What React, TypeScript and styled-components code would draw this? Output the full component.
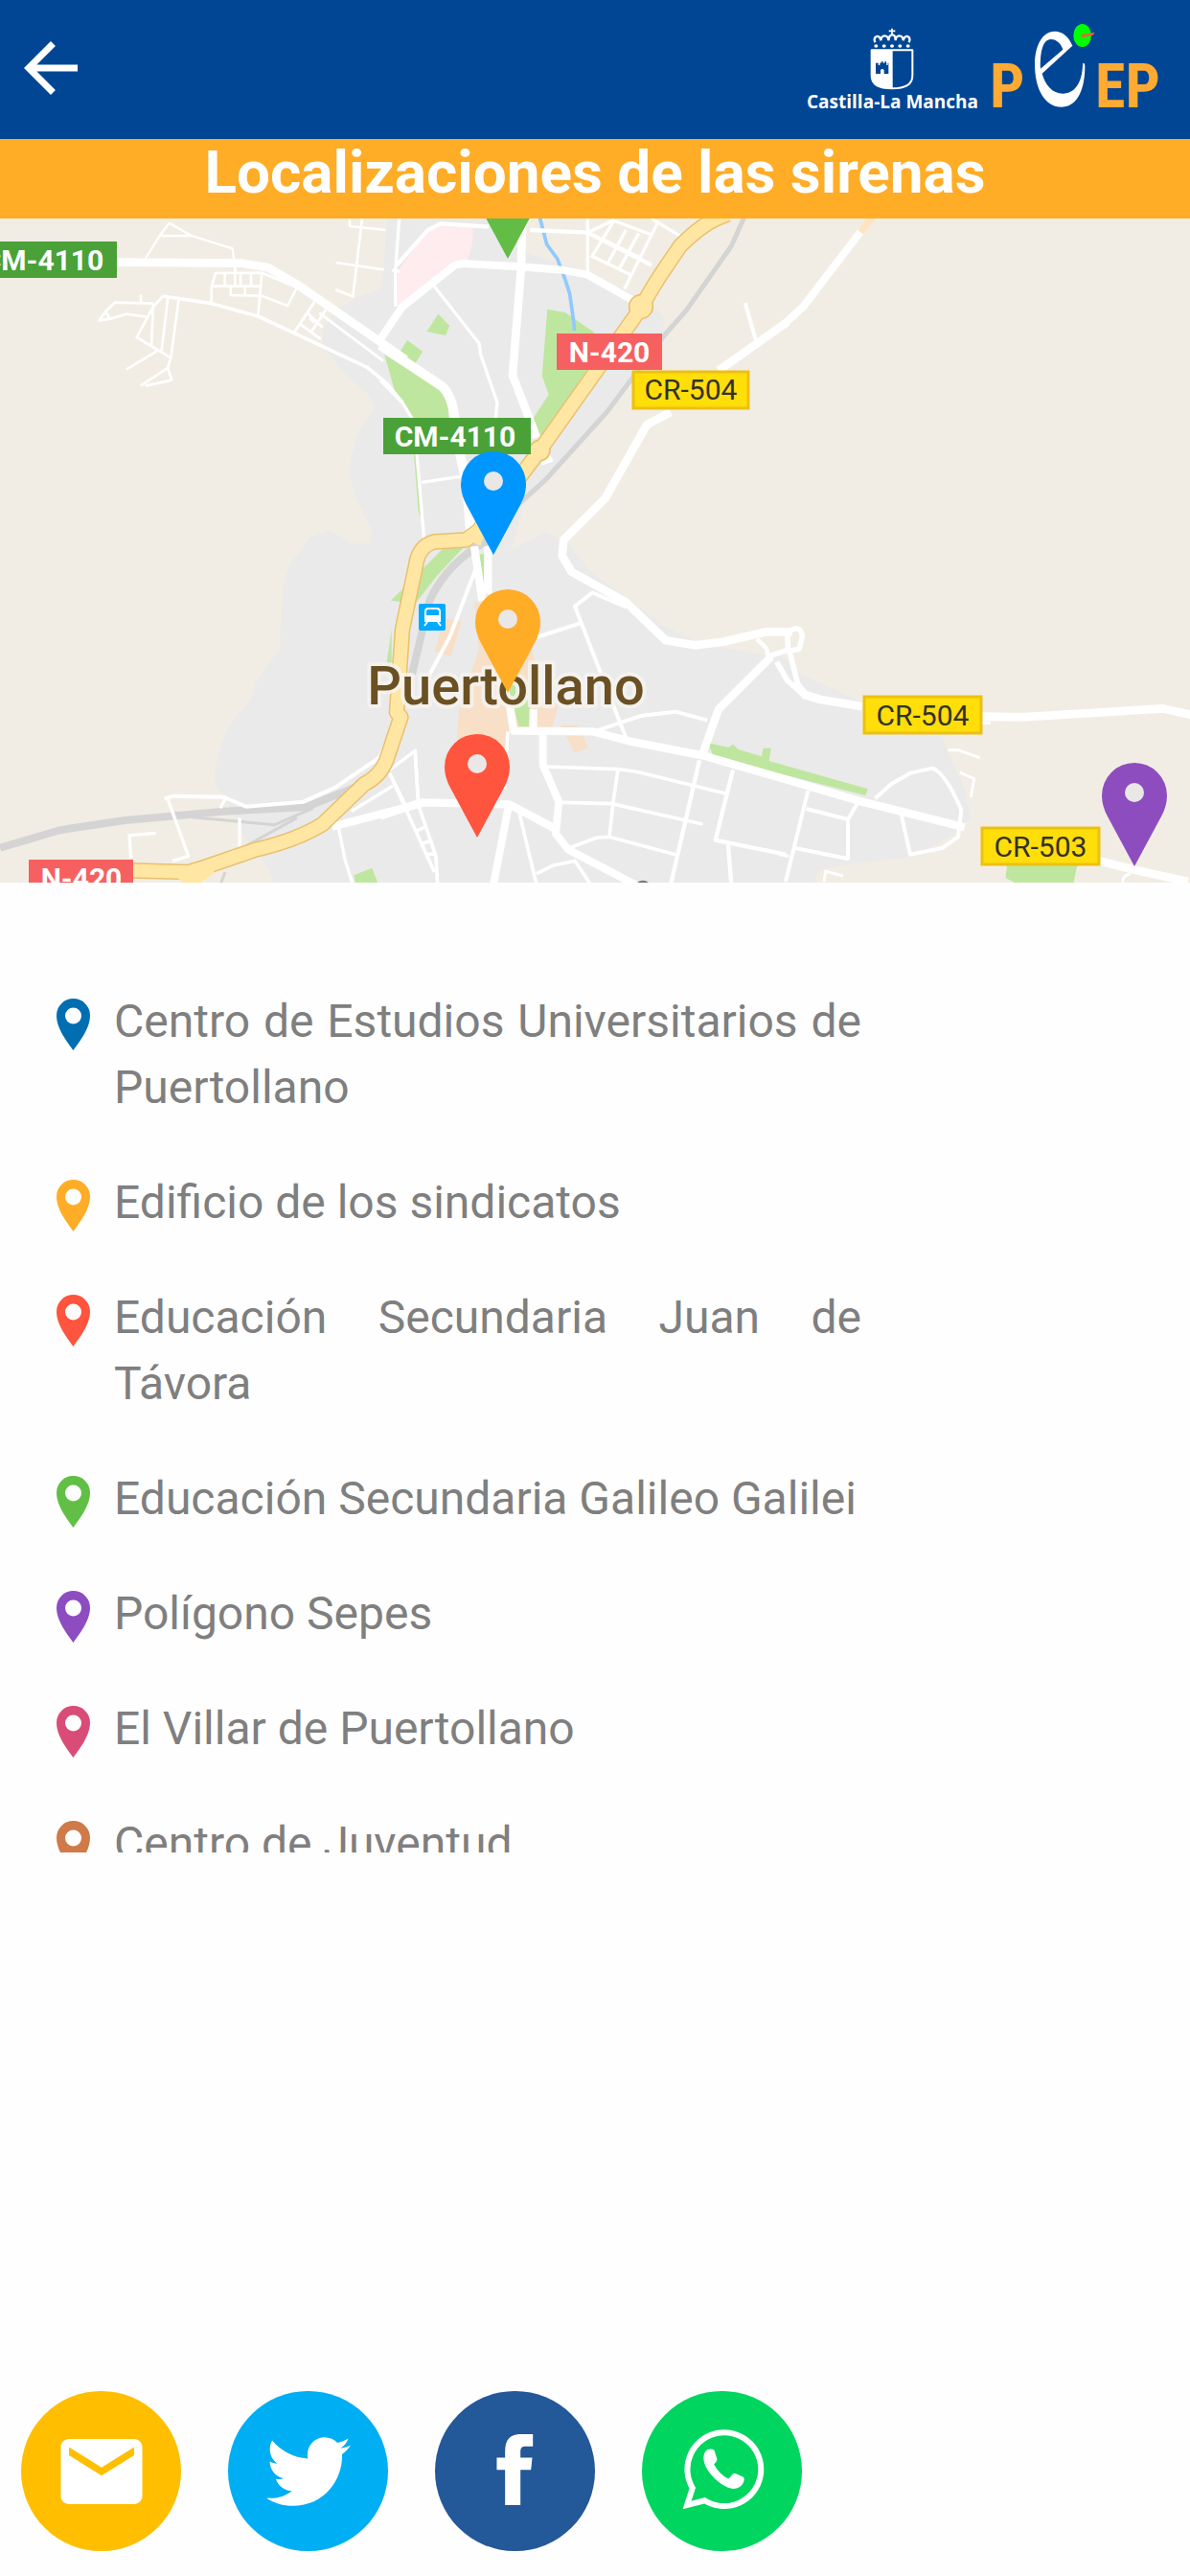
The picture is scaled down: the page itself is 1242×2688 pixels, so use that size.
import React from 'react';
import styled, { createGlobalStyle } from 'styled-components';
import { MdArrowBack, MdEmail } from 'react-icons/md';
import { FaTwitter } from 'react-icons/fa';

const GlobalStyle = createGlobalStyle`
  *, *::before, *::after { box-sizing: border-box; }
  body { margin: 0; background: #fefefe; font-family: Roboto, "Noto Sans", sans-serif; }
`;

const Page = styled.div`
  display: flex;
  flex-direction: column;
  min-height: 100vh;
`;

const TopBar = styled.header`
  display: flex;
  align-items: center;
  justify-content: space-between;
  height: 145px;
  padding: 0 32px 4px 11px;
  background: #004694;
`;

const BackButton = styled.button`
  display: flex;
  padding: 0;
  border: 0;
  background: none;
  color: #fff;
  font-size: 84px;
  cursor: pointer;
`;

const Brands = styled.div`
  display: flex;
  align-items: flex-end;
  gap: 16px;
`;

const Region = styled.div`
  display: flex;
  flex-direction: column;
  align-items: center;
  color: #fff;
  font: bold 19px/22px "Open Sans", "DejaVu Sans", sans-serif;
  svg { display: block; }
`;

const LogoSvg = styled.svg`
  display: block;
  margin-bottom: 4px;
  overflow: visible;
`;

const LogoLetter = styled.text`
  fill: #ffaa33;
  font: bold 64px "Liberation Sans Narrow", "Roboto Condensed", Roboto, sans-serif;
`;

const Title = styled.h1`
  margin: 0;
  height: 83px;
  background: #ffac27;
  color: #fff;
  font-size: 62px;
  font-weight: 700;
  line-height: 70px;
  text-align: center;
`;

const MapSvg = styled.svg`
  display: block;
  width: 100%;
  height: auto;
  background: #f1ede4;
`;

const RoadSign = styled.text<{ $dark?: boolean }>`
  fill: ${p => (p.$dark ? '#33312a' : '#fff')};
  font-family: Roboto, sans-serif;
  font-size: 30px;
  font-weight: ${p => (p.$dark ? 400 : 700)};
  text-anchor: middle;
`;

const TownName = styled.text`
  fill: #6a5023;
  stroke: rgba(245, 243, 240, 0.85);
  stroke-width: 8px;
  stroke-linejoin: round;
  paint-order: stroke;
  font-family: Roboto, sans-serif;
  font-size: 56px;
  font-weight: 500;
  text-anchor: middle;
`;

const ListPanel = styled.main`
  height: 1012px;
  padding: 110px 32px 0 59px;
  overflow-y: auto;
  scrollbar-width: none;
`;

const SirenList = styled.ul`
  display: flex;
  flex-direction: column;
  gap: 51px;
  margin: 0;
  padding: 0;
  list-style: none;
`;

const SirenRow = styled.li`
  display: grid;
  grid-template-columns: 35px minmax(0, 780px);
  column-gap: 25px;
  align-items: start;
`;

const RowPin = styled.svg`
  display: block;
  margin-top: 11px;
`;

const SirenName = styled.p`
  margin: 0;
  color: #7f7f7f;
  font-size: 48px;
  line-height: 69px;
  text-align: justify;
`;

const ShareBar = styled.footer`
  display: flex;
  gap: 49px;
  margin-top: auto;
  padding: 26px 22px;
`;

const ShareLink = styled.a<{ $color: string }>`
  display: flex;
  align-items: center;
  justify-content: center;
  width: 167px;
  height: 167px;
  border-radius: 50%;
  background: ${p => p.$color};
  color: #fff;
`;

function Shield() {
  return (
    <svg width="46" height="66" viewBox="0 0 138 198" aria-hidden="true">
      <path d="M69 2v20M59 10h20" stroke="#fff" strokeWidth="5" />
      <path d="M16 46C6 26 32 18 34 40C34 20 58 20 58 40C60 16 80 16 80 40C80 20 104 20 104 40C108 18 132 26 122 46" fill="none" stroke="#fff" strokeWidth="7" />
      {[19, 44, 69, 94, 119].map(x => <ellipse key={x} cx={x} cy="57" rx="6" ry="5" fill="#fff" />)}
      <path d="M5 70H133V150C133 182 100 190 69 190S5 182 5 150Z" fill="#004694" stroke="#fff" strokeWidth="6" strokeLinejoin="round" />
      <path d="M5 70H71V190C38 190 5 182 5 150Z" fill="#fff" />
      <path d="M18 144V110H26V117H31V110H35V106H41V110H46V106H51V110H52V117H56V110H58V144H44V132Q38 126 33 132V144Z" fill="#004694" />
    </svg>
  );
}

function PeepLogo() {
  return (
    <LogoSvg width="173" height="88" viewBox="0 0 173 88" role="img" aria-label="PEEP">
      <LogoLetter x="-4" y="87">P</LogoLetter>
      <LogoLetter x="106" y="87">EP</LogoLetter>
      <g transform="scale(0.3333) translate(-651 -75)">
        <path fill="#fff" fillRule="evenodd" d="M898 143C885 112 865 98 843 98C800 98 780 150 780 200C780 280 812 335 865 335C915 335 938 275 937 205C935 195 930 195 930 205C928 260 905 293 868 293C835 293 812 265 803 230ZM798 215C796 165 805 123 830 123C850 123 862 138 868 155Z" />
        <ellipse cx="929" cy="111" rx="28" ry="36" fill="#0f0" />
        <path d="M926 109L968 101L962 110L928 118Z" fill="#f0603a" />
      </g>
    </LogoSvg>
  );
}

type Tile = { x: number; y: number; roads: [number, string][] };

/* Minor and main streets, grouped by map tile: [stroke width, path] */
const tiles: Tile[] = [
  {
    x: 0, y: 660,
    roads: [
      [26, 'M360 161L760 164L840 178L930 230L1190 410L1270 465'],
      [7, 'M455 150L500 78L530 38L600 78L728 118L732 150M500 78H600'],
      [8, 'M662 290V240L675 195L820 194L930 240L900 297L820 266M820 194L808 330M662 236H815M704 195V236M736 160V236M753 195V236M786 195V236M722 236V264L820 266M767 240V264'],
      [11, 'M510 267L662 290L808 330L920 382L1150 490L1210 540L1260 600'],
      [8, 'M510 267L480 300L428 396L535 460L560 275M526 270L506 437M480 290L474 420M480 290L360 287L330 316L310 343L345 338L395 323L460 332M330 316L345 338M441 262V285M395 497L490 440M535 460L525 492L440 548M525 492L538 530L455 548'],
      [9, 'M985 285L920 382M1000 320L1200 470M1020 310L975 378M960 318L1010 365M970 335L985 350M940 355L1005 402'],
      [8, 'M1095 20V48L1207 60M1134 24L1105 268L1050 247M1052 162L1202 184'],
    ],
  },
  {
    x: 1200, y: 660,
    roads: [
      [24, 'M-15 410L60 300L225 170L250 165L430 175L560 185L640 200L800 290'],
      [26, 'M435 24L432 175L405 515L480 710'],
      [30, 'M-10 420L185 550Q215 580 222 640L240 760L262 860L275 1030'],
      [13, 'M42 170L140 60L180 40L330 50M460 60L640 68L840 170'],
      [10, 'M50 24L38 190V300M28 185L50 190'],
      [10, 'M155 230L300 415L305 450L357 600L352 650M-10 530L60 600L90 650L105 760L128 1030M120 850L240 832'],
      [10, 'M640 24V200M640 68L720 30L840 75M650 140L775 200M860 35L755 245M720 35L655 140M760 60L700 170M800 70L740 180M690 90L800 145M840 24L940 85'],
      [12, 'M1133 288L1168 410'],
      [26, 'M1265 348L1175 412L1050 500M900 630L825 670L695 900L565 1030L560 1080L590 1130L760 1225L885 1345L975 1360L1060 1350L1200 1318L1280 1318'],
      [14, 'M500 745L525 780L495 790'],
    ],
  },
  { x: 2460, y: 660, roads: [[24, 'M-5 355L55 300L235 65']] },
  {
    x: 0, y: 1710,
    roads: [
      [12, 'M515 790L545 782L700 785L770 815L950 800L1050 755L1190 660L1260 500'],
      [10, 'M525 790L590 970L540 985M705 790L690 820M750 850V940M410 975L405 905L488 898'],
      [25, 'M1040 878L1320 805'],
      [10, 'M1060 880L1080 980L1105 1060M1220 710L1280 830M1100 830L1230 750M1220 700L1300 640L1310 800'],
    ],
  },
  {
    x: 1200, y: 1710,
    roads: [
      [25, 'M-10 845L120 802L395 808L540 885M285 0L310 170M328 0V150'],
      [25, 'M395 490L408 578L655 580L770 610L1000 655L1260 730L1500 800L1820 880'],
      [24, 'M395 800L345 1060M500 580V685L550 800L540 900L580 950L790 1060M470 510V580'],
      [12, 'M290 70L210 280L130 430M480 285L620 240L600 188L655 145L760 190M620 240L760 600M660 580L810 530L915 518L1015 545'],
      [11, 'M390 580L380 760M510 690L735 698L790 705L1075 775M735 698L720 800L708 910M560 802L715 806L1000 870M580 945L670 912L708 910L915 965'],
      [13, 'M990 670L960 800L900 1060M1095 700L1040 920L1260 965M1080 935L1090 1060'],
      [11, 'M425 830L480 1060M480 1025L530 1000L600 985L650 1060M20 710L160 1020M110 810L165 970L170 1060M100 650L110 810M105 890L135 878M125 930L155 920M140 965L165 962'],
      [25, 'M1215 345L1050 510L1000 650'],
      [14, 'M1170 290L1200 320L1205 345'],
    ],
  },
  {
    x: 2460, y: 1710,
    roads: [
      [26, 'M30 430L60 465L110 480L240 502M610 533L740 535L1180 508L1270 528'],
      [17, 'M-60 347L5 325M-28 362L5 420L45 455M8 330L5 270Q50 240 52 285L42 322L12 328L40 440'],
      [26, 'M980 985L1100 1015L1260 1050'],
      [12, 'M280 790L330 745L390 710L460 695Q500 710 550 825L540 910L490 945L390 965L362 840M65 822L195 855V978L30 945M195 855L225 805M70 765L0 1050'],
      [9, 'M508 638H540L608 662M545 708L590 728L580 785M610 553H642M120 1050L125 1018L180 1032M1055 1052Q1055 1030 1080 1025M-20 965L10 970'],
    ],
  },
];

const yellowRoads =
  'M2280 670C2220 690 2180 720 2130 770C2090 830 2050 880 2010 960L1690 1410L1630 1490L1570 1560L1500 1660L1460 1690L1360 1696Q1310 1710 1302 1770L1260 1970L1242 2230L1255 2245L1210 2380Q1190 2430 1140 2455L1010 2580Q930 2630 800 2660L640 2715L590 2730L410 2725';

function MapPin({ x, y, color }: { x: number; y: number; color: string }) {
  return (
    <g transform={`translate(${x} ${y})`}>
      <path d="M0 108L-28 56Q-34 45-34 34A34 34 0 0 1 34 34Q34 45 28 56Z" fill={color} />
      <circle cy="31" r="10" fill="#e9e8e7" />
    </g>
  );
}

function SirenMap() {
  return (
    <MapSvg viewBox="0 0 1242 693" role="img" aria-label="Mapa de Puertollano">
      <g transform="scale(0.33333) translate(0 -684)" fill="none" strokeLinejoin="round">
        <path fill="#eaeaea" d="M1213 680L1200 860L1190 905L1110 935L1060 965L1010 1030V1080L1040 1120L1090 1180L1150 1230L1172 1275L1130 1340L1115 1380L1090 1470L1115 1560L1165 1660L1155 1700H1100L1030 1660L970 1682L940 1725L905 1770L885 1840L875 2030L800 2140L780 2200L730 2250L695 2320L672 2410L675 2455L705 2500L760 2610L835 2710L860 2770H2550L2560 2725L2630 2710L2860 2680L2990 2610L3040 2560L3020 2470L2950 2310L2660 2180L2500 2105L2460 2060L2280 2030L2180 2010L2080 1960L1960 1870L1850 1790L1780 1700L1710 1665L1600 1720L1640 1580L1720 1500L1980 1180L2080 1030L2075 990L2040 950L1840 850L1740 820L1640 790V680Z" />
        <path fill="#ffecef" d="M1350 705L1480 712Q1485 770 1460 820L1425 820L1242 960L1245 850Z" />
        <path fill="#f7dfc8" d="M1390 1935L1445 1945L1412 2055L1362 2040ZM1485 1885L1510 1890L1540 2010L1660 2020L1690 2110V2200H1750L1730 2275L1600 2290L1590 2360L1560 2380L1430 2310L1438 2220L1500 2030ZM1755 2270H1810L1842 2340L1800 2358Z" />
        <g fill="#bfe69f">
          <path d="M1372 983L1408 1020L1395 1050L1336 1038ZM1275 1065L1323 1100L1298 1142L1248 1108ZM1204 1110L1380 1220Q1408 1250 1405 1310H1290L1235 1220Z" />
          <path d="M1714 968L1770 978L1860 1040L1840 1170L1690 1370L1668 1312L1718 1235L1697 1175ZM1295 1410L1305 1420L1325 1640L1310 1600Z" />
          <path d="M1400 1705L1450 1715L1370 1800L1300 1890L1224 1880ZM1226 1970V2080H1210ZM1500 1735H1520L1515 1830ZM1600 2130L1660 2200L1655 2275H1625L1590 2150Z" />
          <path d="M2217 2325L2280 2340L2295 2330L2312 2346L2385 2368L2390 2342H2414L2408 2382L2718 2470L2710 2490L2235 2370ZM3155 2700H3375L3360 2770H3190L3148 2748ZM1108 2740L1165 2717L1185 2770H1115Z" />
        </g>
        <path stroke="#d4d4d4" strokeWidth="15" d="M2330 680L2290 770L2150 970L2080 1050L1900 1290L1710 1500L1600 1600" />
        <path stroke="#d4d4d4" strokeWidth="24" d="M1530 1690Q1400 1760 1345 1880L1290 2110M0 2654L190 2598L390 2568L700 2540L960 2526L1160 2445" />
        <path stroke="#d4d4d4" strokeWidth="9" d="M600 2558L860 2582L980 2530M740 2665L930 2560M705 2730L690 2770" />
        <path stroke="#90c9ff" strokeWidth="11" d="M1690 680L1712 765L1745 810L1768 870L1784 920L1798 1020V1035" />
        {tiles.map(t => (
          <g key={`${t.x}-${t.y}`} transform={`translate(${t.x} ${t.y})`} stroke="#fff">
            {t.roads.map(([w, d]) => <path key={d} d={d} strokeWidth={w} />)}
          </g>
        ))}
        <path stroke="#ffe4c4" strokeWidth="24" d="M2695 727L2730 680" />
        <path stroke="#e9c06e" strokeWidth="50" d={yellowRoads} />
        <circle cx="2007" cy="960" r="37" fill="#ffe6a3" stroke="#e9c06e" strokeWidth="5" />
        <circle cx="1690" cy="1410" r="32" fill="#ffe6a3" stroke="#e9c06e" strokeWidth="5" />
        <g stroke="#ffe6a3" strokeWidth="41">
          <path d={yellowRoads} />
          <path d="M1485 1700L1510 1640M560 2726L600 2758L660 2715" />
        </g>
        <circle cx="2013" cy="2782" r="22" stroke="#777" strokeWidth="8" />
      </g>

      <rect x="437" y="402" width="28" height="28" rx="2" fill="#0af" />
      <rect x="444" y="407" width="15" height="13" rx="3" fill="none" stroke="#fff" strokeWidth="2" />
      <path d="M444 415H459V420H444ZM446 421L443 425M457 421L460 425" fill="#fff" stroke="#fff" strokeWidth="2" />

      <rect y="24" width="122" height="38" fill="#4aa138" />
      <RoadSign x="45" y="54">CM-4110</RoadSign>
      <rect x="400" y="208" width="154" height="38" fill="#4aa138" />
      <RoadSign x="475" y="238">CM-4110</RoadSign>
      <rect x="581" y="120" width="110" height="38" fill="#f76060" />
      <RoadSign x="636" y="150">N-420</RoadSign>
      <rect x="30" y="669" width="109" height="38" fill="#f76060" />
      <RoadSign x="85" y="699">N-420</RoadSign>
      <g fill="#ffde0a" stroke="#edc011" strokeWidth="3">
        <rect x="661" y="160" width="120" height="38" />
        <rect x="902" y="499" width="122" height="38" />
        <rect x="1025" y="636" width="122" height="38" />
      </g>
      <RoadSign $dark x="721" y="189">CR-504</RoadSign>
      <RoadSign $dark x="963" y="529">CR-504</RoadSign>
      <RoadSign $dark x="1086" y="666">CR-503</RoadSign>
      <TownName x="528" y="507">Puertollano</TownName>

      <MapPin x={530} y={-66} color="#62bc46" />
      <MapPin x={515} y={243} color="#0096ff" />
      <MapPin x={530} y={387} color="#ffac27" />
      <MapPin x={498} y={538} color="#ff543d" />
      <MapPin x={1184} y={568} color="#8d4dbf" />
    </MapSvg>
  );
}

const sirens = [
  { name: 'Centro de Estudios Universitarios de Puertollano', color: '#006eb0' },
  { name: 'Edificio de los sindicatos', color: '#ffac27' },
  { name: 'Educación Secundaria Juan de Távora', color: '#ff543d' },
  { name: 'Educación Secundaria Galileo Galilei', color: '#62bf46' },
  { name: 'Polígono Sepes', color: '#8d4dc1' },
  { name: 'El Villar de Puertollano', color: '#da4c78' },
  { name: 'Centro de Juventud', color: '#cf7a48' },
];

export default function App() {
  return (
    <Page>
      <GlobalStyle />
      <TopBar>
        <BackButton type="button" aria-label="Volver">
          <MdArrowBack />
        </BackButton>
        <Brands>
          <Region>
            <Shield />
            Castilla-La Mancha
          </Region>
          <PeepLogo />
        </Brands>
      </TopBar>
      <Title>Localizaciones de las sirenas</Title>
      <SirenMap />
      <ListPanel>
        <SirenList>
          {sirens.map(s => (
            <SirenRow key={s.name}>
              <RowPin width="35" height="54" viewBox="0 0 35 54" aria-hidden="true">
                <path fill={s.color} fillRule="evenodd" d="M17.5 54C12 46 0 32 0 17.5A17.5 17.5 0 0 1 35 17.5C35 32 23 46 17.5 54ZM17.5 9.5A8.5 8.5 0 1 0 17.5 26.5A8.5 8.5 0 1 0 17.5 9.5Z" />
              </RowPin>
              <SirenName>{s.name}</SirenName>
            </SirenRow>
          ))}
        </SirenList>
      </ListPanel>
      <ShareBar>
        <ShareLink href="#correo" $color="#ffbf00" aria-label="Correo">
          <MdEmail size={102} />
        </ShareLink>
        <ShareLink href="#twitter" $color="#00aef3" aria-label="Twitter">
          <FaTwitter size={88} />
        </ShareLink>
        <ShareLink href="#facebook" $color="#235899" aria-label="Facebook">
          <svg width="167" height="167" viewBox="0 0 500 500" aria-hidden="true">
            <path fill="#fff" d="M219 356V246H193V208H219V190C219 150 235 135 270 135H306V173H282Q267 173 267 188V208H304L300 246H267V356Z" />
          </svg>
        </ShareLink>
        <ShareLink href="#whatsapp" $color="#00d560" aria-label="WhatsApp">
          <svg width="167" height="167" viewBox="0 0 500 500" aria-hidden="true">
            <path fill="none" stroke="#fff" strokeWidth="18" d="M158 303A115 115 0 1 1 196 342L141 356Z" />
            <path fill="#fff" d="M205 183Q219 178 226 185L235 213Q234 220 225 229C235 248 253 266 271 274L283 260Q288 256 296 259L317 269Q322 275 317 286C305 310 278 309 257 296C228 278 205 253 195 225C190 207 193 190 205 183Z" />
          </svg>
        </ShareLink>
      </ShareBar>
    </Page>
  );
}
